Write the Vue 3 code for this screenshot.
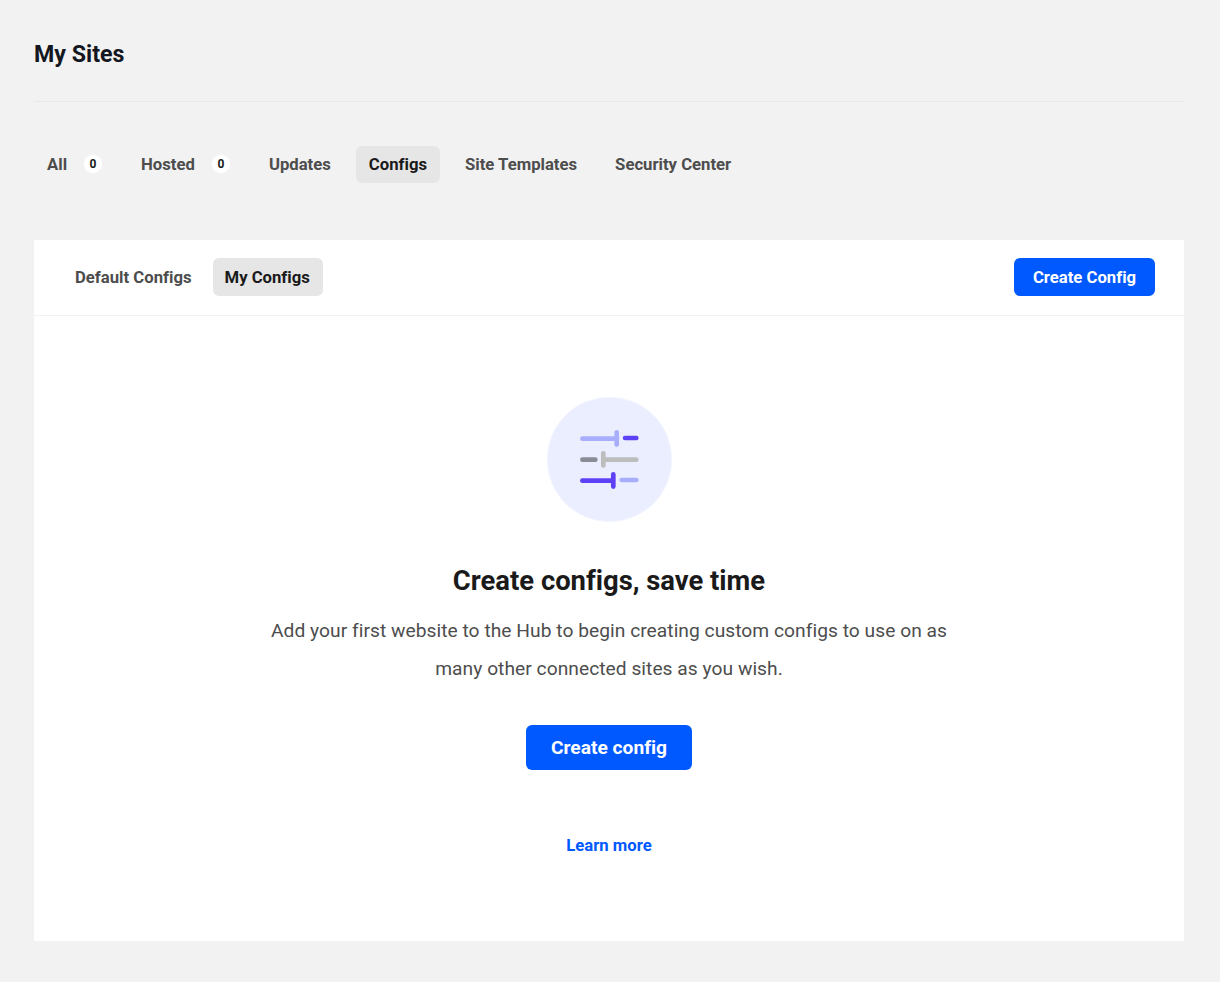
<script setup>
const tabs = [
  { label: 'All', count: 0 },
  { label: 'Hosted', count: 0 },
  { label: 'Updates' },
  { label: 'Configs', active: true },
  { label: 'Site Templates' },
  { label: 'Security Center' },
]
</script>

<template>
  <div class="page">
    <header class="head"><h1>My Sites</h1></header>
    <nav class="tabs">
      <a v-for="t in tabs" :key="t.label" class="tab" :class="{ active: t.active }">
        {{ t.label }}<span v-if="t.count !== undefined" class="badge">{{ t.count }}</span>
      </a>
    </nav>
    <section class="card">
      <div class="bar">
        <div class="subtabs">
          <a class="tab">Default Configs</a>
          <a class="tab active">My Configs</a>
        </div>
        <button class="btn small">Create Config</button>
      </div>
      <div class="empty">
        <svg class="art" width="126" height="126" viewBox="0 0 126 126" fill="none">
          <circle cx="63.500" cy="62.400" r="62.200" fill="#eaeeff" stroke="#f3f5ff"/>
          <g stroke-linecap="round" stroke-width="4.700">
            <path d="M36.400 41.700H71" stroke="#a9aefc"/>
            <path d="M79.100 41H90.300" stroke="#5e41f5"/>
            <path d="M36.400 62.700H49.300" stroke="#8b8d96"/>
            <path d="M59 62.700H90.300" stroke="#bcbdbd"/>
            <path d="M36.400 83.700H66" stroke="#5e41f5"/>
            <path d="M75.700 83H90.300" stroke="#a9aefc"/>
            <path d="M70.700 35.400V47.600" stroke="#a9aefc"/>
            <path d="M57.300 56.400V68.400" stroke="#bcbdbd"/>
            <path d="M67.300 77.400V89.600" stroke="#5e41f5"/>
          </g>
        </svg>
        <h2>Create configs, save time</h2>
        <p>Add your first website to the Hub to begin creating custom configs to use on as many other connected sites as you wish.</p>
        <button class="btn large">Create config</button>
        <a class="learn">Learn more</a>
      </div>
    </section>
  </div>
</template>

<style>
html, body { margin: 0; background: #f2f2f2; }
</style>

<style scoped>
.page {
  box-sizing: border-box;
  width: 1220px;
  height: 982px;
  padding: 0 36px 0 34px;
  background: #f2f2f2;
  font-family: Roboto, "Liberation Sans", sans-serif;
  font-variant-ligatures: none;
  overflow: hidden;
}
.head {
  box-sizing: border-box;
  height: 102px;
  padding-top: 39px;
  border-bottom: 1px solid #e9e9e9;
}
h1 {
  margin: 0;
  font-size: 23.200px;
  line-height: 30px;
  font-weight: 700;
  color: #14171f;
}
.tabs {
  display: flex;
  gap: 12px;
  margin-top: 44px;
  height: 37px;
}
.tab {
  box-sizing: border-box;
  display: flex;
  align-items: center;
  height: 37px;
  padding: 0 13px 1px;
  border-radius: 6px;
  font-size: 16.700px;
  font-weight: 700;
  color: #4d4d4d;
}
.tab.active {
  background: #e6e6e6;
  color: #1a1a1a;
}
.badge {
  display: flex;
  align-items: center;
  justify-content: center;
  box-sizing: border-box;
  width: 20px;
  height: 20px;
  margin-left: 16px;
  border-radius: 50%;
  border: 1px solid #f5f5f5;
  background: #fff;
  font-size: 12px;
  font-weight: 700;
  color: #1a1a1a;
}
.card {
  margin-top: 57px;
  height: 701px;
  background: #fff;
}
.bar {
  box-sizing: border-box;
  height: 76px;
  padding: 18px 29px 0;
  border-bottom: 1px solid #f2f2f2;
  display: flex;
  align-items: flex-start;
  justify-content: space-between;
}
.subtabs {
  display: flex;
  gap: 9px;
}
.subtabs .tab {
  height: 38px;
  padding: 0 12px;
}
.subtabs .tab.active {
  padding: 0 13px 0 12px;
}
.btn {
  border: 0;
  background: #0059ff;
  color: #fff;
  font-family: inherit;
  font-variant-ligatures: none;
  font-weight: 700;
  border-radius: 6px;
}
.btn.small {
  width: 141px;
  height: 38px;
  font-size: 16.700px;
}
.empty {
  display: flex;
  flex-direction: column;
  align-items: center;
  padding-top: 81px;
}
.art { display: block; }
h2 {
  margin: 40px 0 0;
  font-size: 27.400px;
  line-height: 36px;
  font-weight: 700;
  color: #1a1a1a;
}
p {
  margin: 13px 0 0;
  width: 700px;
  text-align: center;
  font-size: 19.200px;
  line-height: 38px;
  letter-spacing: 0.04px;
  color: #4d4d4d;
}
.btn.large {
  width: 166px;
  height: 45px;
  margin-top: 37px;
  font-size: 19.200px;
}
.learn {
  margin-top: 65px;
  font-size: 16.700px;
  line-height: 21px;
  font-weight: 700;
  color: #0059ff;
}
</style>
